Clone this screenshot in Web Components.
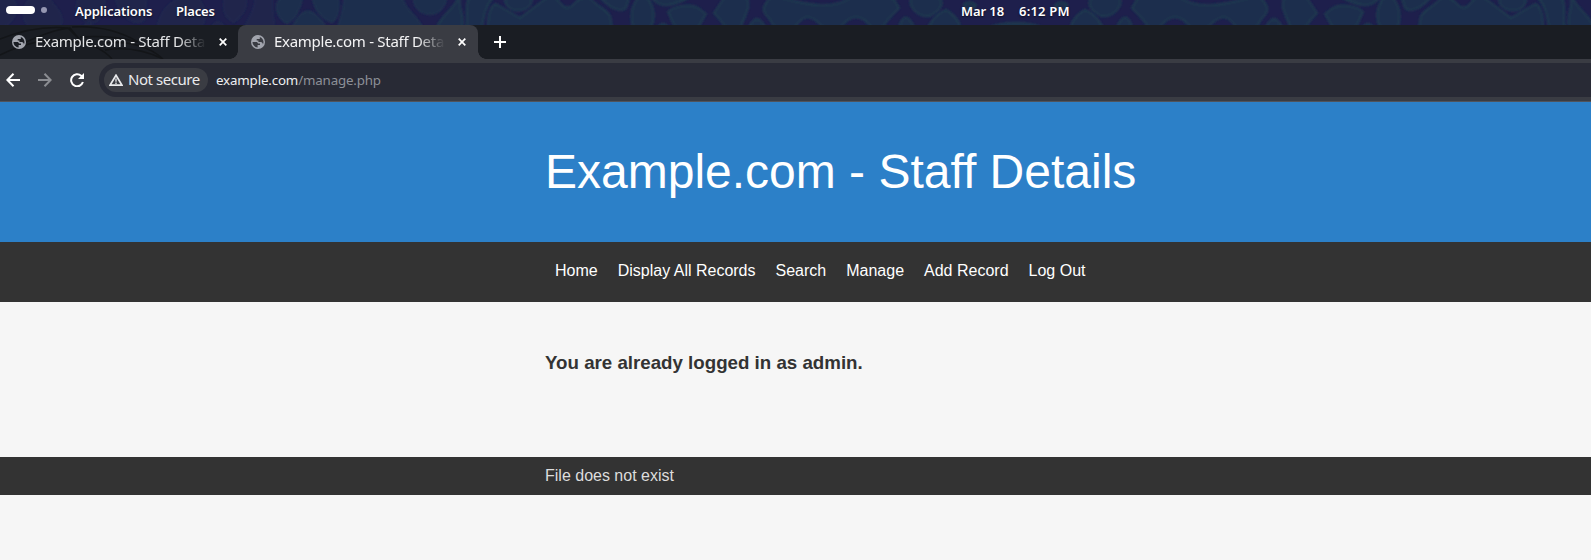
<!DOCTYPE html>
<html lang="en">
<head>
<meta charset="utf-8">
<title>Example.com - Staff Details</title>
<style>
html,body{margin:0;height:100%;overflow:hidden}
body{background:#f6f6f6;font-family:"Liberation Sans",Arial,sans-serif}
</style>
</head>
<body>
<desktop-bar></desktop-bar>
<tab-strip>
  <browser-tab>Example.com - Staff Details</browser-tab>
  <browser-tab active>Example.com - Staff Details</browser-tab>
</tab-strip>
<browser-toolbar><span slot="host">example.com</span><span slot="path">/manage.php</span></browser-toolbar>
<page-header>Example.com - Staff Details</page-header>
<page-nav><a>Home</a><a>Display All Records</a><a>Search</a><a>Manage</a><a>Add Record</a><a>Log Out</a></page-nav>
<page-content>You are already logged in as admin.</page-content>
<page-footer>File does not exist</page-footer>
<script>
const define = (name, html) => customElements.define(name, class extends HTMLElement {
  constructor() {
    super();
    this.attachShadow({mode: 'open'}).innerHTML = html;
  }
});

define('desktop-bar', `
<style>
:host{display:grid;height:25px;overflow:hidden;background:#1e1f4c;color:#fff;font:600 13px/25px "Noto Sans",sans-serif}
.wall,.row{grid-area:1/1}
.wall{display:block;width:1591px;height:25px}
.row{display:flex;align-items:flex-start;height:23px;line-height:23px;text-shadow:0 1px 2px #0009;white-space:nowrap}
.pill{width:29px;height:8px;border-radius:4px;background:#fff;margin:6px 6px 0 6px}
.dot{width:6px;height:6px;border-radius:3px;background:#9597b1;margin-top:7px}
.apps{margin-left:28px;width:101px;letter-spacing:-.08px}.places{width:785px;letter-spacing:-.2px}.date{width:58px;letter-spacing:-.1px}.time{letter-spacing:.2px}
</style>
<svg class="wall" viewBox="0 0 1591 25">
<defs><filter id="soft" x="0" y="0" width="1" height="1"><feGaussianBlur stdDeviation=".8"/></filter>
<g id="cells">
<path d="M505-2C505 8 514 12 522 10S532 4 532-2Z"/>
<path d="M488 27C488 15 490 6 496 4C505 9 512 14 520 18L540 3L546-2H557C560 5 565 9 570 7S576 0 582-2H590C596 6 606 9 610 16L612 27Z"/>
<path d="M601-2C610 8 620 13 626 8L629-2ZM638-2C630 8 631 20 633 27H651C657 15 652 5 648-2ZM652-2C660 8 670 7 688-2ZM668 12C674 6 690 3 698 8L706 14C702 20 700 25 698 27H675ZM658 27Q663 21 668 27ZM724-2L714 13C720 19 723 23 725 27H741C744 15 751 10 747-2ZM749 27Q757 11 765 27ZM770-2C764 4 762 10 766 15C770 18 773 25 774 27H795C803 14 811 14 823 27H841C850 14 862 14 871 27H883C888 18 895 12 899 8L893-2H850C835 8 815 7 782-2ZM899 27Q905 8 914 27ZM911-2C908 8 920 18 930 16C937 12 945 6 940-2ZM928 27C934 17 940 12 946 10C952 13 959 20 960 27ZM964 4Q970 0 976 5Q972 13 965 9ZM990 27Q1015 19 1040 27Z"/>
<path d="M437 27C442 15 454 9 458-2H460C458 10 465 14 462 27ZM469-2C464 8 469 18 466 27H482C484 15 486 5 493-2Z"/>
</g></defs>
<g fill="#1f2d4d" stroke="#1f3b50" stroke-width="2" filter="url(#soft)">
<use href="#cells"/><use href="#cells" transform="translate(2031 0) scale(-1 1)"/>
<g stroke="#1f3450"><path d="M281-2C273 6 278 18 287 23C295 20 300 8 302-2ZM313-2C315 10 322 18 332 22C338 18 339 8 338-2ZM293 27C300 12 308 8 315 15C320 19 324 23 325 27ZM345-2C343 10 342 18 338 27H422C415 14 405 10 402-2ZM414-2C414 10 424 14 430 14S445 9 446-2Z"/>
<path opacity=".5" d="M-2-2H12C20 8 16 18 4 27H-2ZM30 27C20 18 24 6 30-2H48C56 8 65 15 60 27ZM79-2C73 10 80 20 90 22S103 12 105-2ZM83 27Q88 21 94 27ZM116-2C119 14 130 23 139 22S146 8 145-2ZM158 27C160 12 168 4 180-2H197C206 6 206 18 202 27ZM225-2C222 10 226 18 234 22C243 14 247 8 246-2ZM212 27Q217 18 225 27ZM256-2C255 8 252 14 245 27H274L272 9V-2Z"/></g>
</g></svg>
<div class="row"><span class="pill"></span><span class="dot"></span><span class="apps">Applications</span><span class="places">Places</span><span class="date">Mar 18</span><span class="time">6:12 PM</span></div>`);

define('tab-strip', `
<style>
:host{display:flex;height:34px;background:#1a1d23;overflow:hidden;color:#fff}
svg.plus{width:12px;height:12px;margin:11px 0 0 16px}
</style>
<slot></slot>
<svg class="plus" viewBox="0 0 12 12"><path d="M6 0V12M0 6H12" stroke="#fff" stroke-width="2"/></svg>`);

define('browser-tab', `
<style>
:host{display:flex;position:relative;box-sizing:border-box;width:238px;height:34px;padding-left:12px;align-items:center;font:15px/32px "Noto Sans",sans-serif;color:#e4e5e7;--cut:#1a1d23}
:host([active]){width:240px;padding-left:13px;background:#3a3c43;border-radius:8px 8px 0 0;color:#f4f4f5;--cut:#3a3c43}
.foot{display:none;position:absolute;bottom:0;width:8px;height:8px}
:host([active]) .foot{display:block}
.l{left:-8px;background:radial-gradient(circle at 0 0,#1a1d23 7.5px,#3a3c43 8px)}
.r{right:-8px;background:radial-gradient(circle at 100% 0,#1a1d23 7.5px,#3a3c43 8px)}
.dragon{position:absolute;left:0;top:0;width:230px;height:34px}
:host([active]) .dragon{display:none}
.globe{width:14px;height:14px;flex:none;position:relative}
.t{width:173px;height:34px;margin-left:9px;overflow:hidden;white-space:nowrap;position:relative;letter-spacing:-.28px;-webkit-mask-image:linear-gradient(90deg,#000 143px,transparent 171px)}
.x{width:8px;height:8px;margin-left:11px;flex:none;position:relative}
</style>
<svg class="dragon" viewBox="0 0 230 34" fill="none" stroke="#131518" stroke-width="1.5"><path d="M0 14Q35 0 68 3L80 15L70 3Q50 5 20 20M72 2Q110 0 138 17Q110 10 80 12M105 18Q142 15 163 34Q135 20 105 25M0 30Q40 10 75 17Q100 20 112 34"/></svg>
<span class="foot l"></span><span class="foot r"></span>
<svg class="globe" viewBox="0 0 14 14"><circle cx="7" cy="7" r="7" fill="#a1a4ad"/><path d="M1.500 7H5C6.200 7 7 7.700 7 8.500H9V10H6.600V12.400C3.700 12.200 1.500 9.900 1.500 7ZM8.800 1.900C11 2.600 12.500 4.600 12.500 7C12.500 7.900 12.300 8.700 11.900 9.400C11.700 8 11 7.200 9.900 7.100H7.400V5.500H5.700V4H8.800Z" fill="var(--cut)"/></svg>
<span class="t"><slot></slot></span>
<svg class="x" viewBox="0 0 8 8"><path d="M.7.7L7.300 7.300M7.300.7L.7 7.300" stroke="#fff" stroke-width="1.700"/></svg>`);

define('browser-toolbar', `
<style>
:host{display:flex;height:43px;box-sizing:border-box;border-bottom:1px solid #50535b;background:#3a3c43;padding:4px 0 4px 6px;align-items:center;font-family:"Noto Sans",sans-serif;overflow:hidden}
.i{width:14px;height:14px;flex:none;margin-right:18px}
.reload{margin:0 15px 0 0}
.omni{display:flex;flex:1;height:34px;background:#282a35;border-radius:17px 0 0 17px;align-items:center;padding-left:5px;white-space:nowrap}
.chip{display:flex;align-items:center;box-sizing:border-box;width:104px;height:24px;border-radius:12px;background:#3a3c43;padding-left:5px;color:#e9eaec;font-size:15px;letter-spacing:-.45px;line-height:22px}
.chip span{height:24px}
.chip svg{width:14px;height:12px;margin-right:5px}
.url{margin-left:8px;font-size:13.330px;letter-spacing:-.16px;color:#8d9098}
slot[name=host]{color:#eeeff1}
</style>
<svg class="i" viewBox="0 0 14 14" fill="none" stroke="#fff" stroke-width="2"><path d="M14 7H1.500M7.500.8L1.400 7L7.500 13.200"/></svg>
<svg class="i" viewBox="0 0 14 14" fill="none" stroke="#8b8d92" stroke-width="2"><path d="M0 7H12.500M6.500.8L12.600 7L6.500 13.200"/></svg>
<svg class="i reload" viewBox="0 0 14 14"><path d="M12.900 9A6 6 0 1 1 11.200 2.800L12.200 3.800" fill="none" stroke="#fff" stroke-width="2"/><path d="M14 0V6H8Z" fill="#fff"/></svg>
<div class="omni"><div class="chip"><svg viewBox="0 0 14 12"><path d="M7 1.200L13 11.200H1Z" fill="none" stroke="#e9eaec" stroke-width="1.700"/><path d="M7 4.500V7.700M7 8.500V10" stroke="#e9eaec" stroke-width="1.300"/></svg><span>Not secure</span></div>
<span class="url"><slot name="host"></slot><slot name="path"></slot></span></div>`);

define('page-header', `
<style>
:host{display:block;box-sizing:border-box;height:140px;padding:42px 0 0 545px;background:#2c80c8;color:#fff}
h1{margin:0;font-weight:400;font-size:48px;line-height:56px}
</style><h1><slot></slot></h1>`);

define('page-nav', `
<style>
:host{display:flex;box-sizing:border-box;height:60px;padding:20px 0 0 555px;gap:20px;background:#333;color:#fff;font-size:16px;line-height:18px}
</style><slot></slot>`);

define('page-content', `
<style>
:host{display:block;box-sizing:border-box;height:155px;padding:50px 0 0 545px;color:#333}
h3{margin:0;font-size:18.720px;line-height:22px}
</style><h3><slot></slot></h3>`);

define('page-footer', `
<style>
:host{display:block;box-sizing:border-box;height:38px;padding:10px 0 0 545px;background:#333;color:#ddd;font-size:16px;line-height:18px}
</style><slot></slot>`);
</script>
</body>
</html>
